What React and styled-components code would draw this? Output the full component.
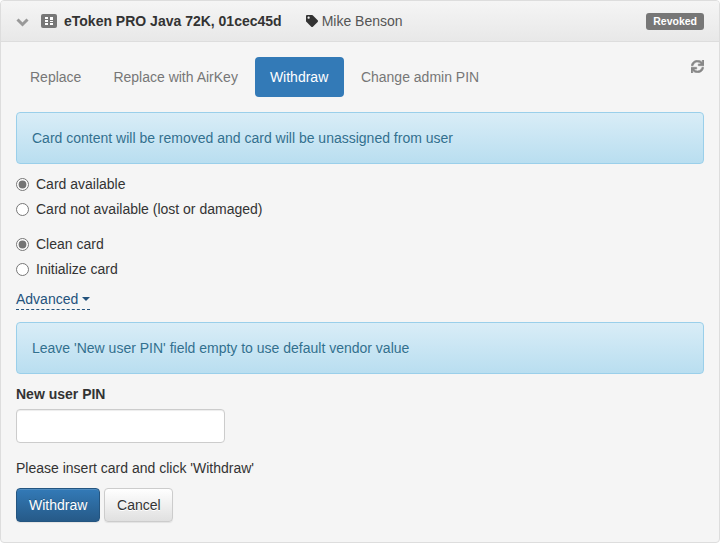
import React from 'react';
import styled, { createGlobalStyle } from 'styled-components';
import { FaTag, FaSync } from 'react-icons/fa';

const GlobalStyle = createGlobalStyle`
  html, body {
    margin: 0;
    padding: 0;
    background: #fff;
  }
  * {
    box-sizing: border-box;
  }
  body {
    font-family: "Liberation Sans", Arial, sans-serif;
    font-size: 14px;
    line-height: 20px;
    color: #333;
  }
`;

const Panel = styled.div`
  width: 720px;
  height: 543px;
  border: 1px solid #ddd;
  border-radius: 4px;
  background: #f5f5f5;
  overflow: hidden;
`;

const Heading = styled.div`
  display: flex;
  align-items: center;
  height: 41px;
  padding: 0 15px;
  background: linear-gradient(to bottom, #f5f5f5, #e8e8e8);
  border-bottom: 1px solid #ddd;
`;

const Chevron = styled.svg`
  width: 13px;
  height: 9px;
  margin-top: 2px;
  margin-right: 12px;
`;

const CardIcon = styled.svg`
  width: 16px;
  height: 14px;
  margin-right: 7px;
`;

const CardName = styled.span`
  font-weight: 700;
  color: #333;
`;

const Owner = styled.span`
  display: flex;
  align-items: center;
  margin-left: 24px;
  color: #555;
`;

const TagIcon = styled(FaTag)`
  width: 12px;
  height: 12px;
  color: #333;
  margin-right: 4px;
`;

const Badge = styled.span`
  margin-left: auto;
  padding: 3px 7px;
  border-radius: 3px;
  background: #777;
  color: #fff;
  font-size: 10.5px;
  font-weight: 700;
  line-height: 11px;
`;

const Body = styled.div`
  padding: 15px;
`;

const TabRow = styled.div`
  display: flex;
  align-items: flex-start;
  justify-content: space-between;
  margin-left: -1px;
  margin-bottom: 15px;
`;

const Pills = styled.div`
  display: flex;
  gap: 2px;
`;

const Pill = styled.a`
  min-width: ${props => (props.$active ? '89px' : '0')};
  padding: 10px 15px;
  border-radius: 4px;
  color: ${props => (props.$active ? '#fff' : '#777')};
  background: ${props => (props.$active ? '#337ab7' : 'transparent')};
`;

const Refresh = styled(FaSync)`
  width: 13px;
  height: 13px;
  margin-top: 3px;
  color: #888;
  stroke: currentColor;
  stroke-width: 24px;
`;

const Alert = styled.div`
  height: 52px;
  padding: 15px;
  border: 1px solid #9acfea;
  border-radius: 4px;
  background: linear-gradient(to bottom, #d9edf7, #b9def0);
  color: #31708f;
  text-shadow: 0 1px 0 rgba(255, 255, 255, 0.2);
`;

const RadioGroup = styled.div`
  margin-top: ${props => props.$top || 10}px;
`;

const RadioRow = styled.label`
  display: flex;
  align-items: center;
  height: 20px;
  margin-bottom: 5px;
`;

const Radio = styled.input.attrs({ type: 'radio' })`
  width: 13px;
  height: 13px;
  margin: 0 7px 0 0;
  accent-color: #757575;
`;

const Advanced = styled.a`
  display: inline-flex;
  align-items: center;
  height: 21px;
  margin-top: 5px;
  color: #23527c;
  border-bottom: 1px dashed #23527c;
`;

const Caret = styled.span`
  width: 0;
  height: 0;
  margin-left: 4px;
  border-top: 4px solid #23527c;
  border-left: 4px solid transparent;
  border-right: 4px solid transparent;
`;

const SpacedAlert = styled(Alert)`
  margin-top: 12px;
`;

const FieldLabel = styled.label`
  display: block;
  margin-top: 10px;
  margin-bottom: 5px;
  font-weight: 700;
`;

const PinInput = styled.input`
  display: block;
  width: 209px;
  height: 34px;
  padding: 6px 12px;
  border: 1px solid #ccc;
  border-radius: 4px;
  background: #fff;
  box-shadow: inset 0 1px 1px rgba(0, 0, 0, 0.075);
`;

const Hint = styled.p`
  margin: 15px 0 10px;
`;

const Actions = styled.div`
  display: flex;
  gap: 4px;
`;

const Button = styled.button`
  height: 34px;
  padding: 6px 12px;
  border-radius: 4px;
  font: inherit;
  box-shadow: inset 0 1px 0 rgba(255, 255, 255, 0.15), 0 1px 1px rgba(0, 0, 0, 0.075);
`;

const PrimaryButton = styled(Button)`
  color: #fff;
  border: 1px solid #245580;
  background: linear-gradient(to bottom, #337ab7, #265a88);
  text-shadow: 0 -1px 0 rgba(0, 0, 0, 0.2);
`;

const DefaultButton = styled(Button)`
  width: 69px;
  padding: 6px 0;
  color: #333;
  border: 1px solid #ccc;
  background: linear-gradient(to bottom, #fff, #e0e0e0);
  text-shadow: 0 1px 0 #fff;
`;

const App = () => {
  return (
    <>
      <GlobalStyle />
      <Panel>
        <Heading>
          <Chevron viewBox="0 0 13 9">
            <path d="M1.5 1.5L6.5 6.5L11.5 1.5" fill="none" stroke="#999" strokeWidth="3" />
          </Chevron>
          <CardIcon viewBox="0 0 16 14">
            <rect width="16" height="14" rx="2" fill="#777" />
            <path d="M4 3h3v2H4zM4 6h3v2H4zM4 9h3v2H4zM9 3h3v3H9zM9 7h3v1H9zM9 9h3v2H9z" fill="#fff" />
          </CardIcon>
          <CardName>eToken PRO Java 72K, 01cec45d</CardName>
          <Owner>
            <TagIcon />
            Mike Benson
          </Owner>
          <Badge>Revoked</Badge>
        </Heading>
        <Body>
          <TabRow>
            <Pills>
              <Pill>Replace</Pill>
              <Pill>Replace with AirKey</Pill>
              <Pill $active>Withdraw</Pill>
              <Pill>Change admin PIN</Pill>
            </Pills>
            <Refresh />
          </TabRow>
          <Alert>Card content will be removed and card will be unassigned from user</Alert>
          <RadioGroup>
            <RadioRow><Radio name="availability" defaultChecked />Card available</RadioRow>
            <RadioRow><Radio name="availability" />Card not available (lost or damaged)</RadioRow>
          </RadioGroup>
          <RadioGroup $top={15}>
            <RadioRow><Radio name="action" defaultChecked />Clean card</RadioRow>
            <RadioRow><Radio name="action" />Initialize card</RadioRow>
          </RadioGroup>
          <Advanced>Advanced<Caret /></Advanced>
          <SpacedAlert>Leave 'New user PIN' field empty to use default vendor value</SpacedAlert>
          <FieldLabel>New user PIN</FieldLabel>
          <PinInput />
          <Hint>Please insert card and click 'Withdraw'</Hint>
          <Actions>
            <PrimaryButton>Withdraw</PrimaryButton>
            <DefaultButton>Cancel</DefaultButton>
          </Actions>
        </Body>
      </Panel>
    </>
  );
};

export default App;
